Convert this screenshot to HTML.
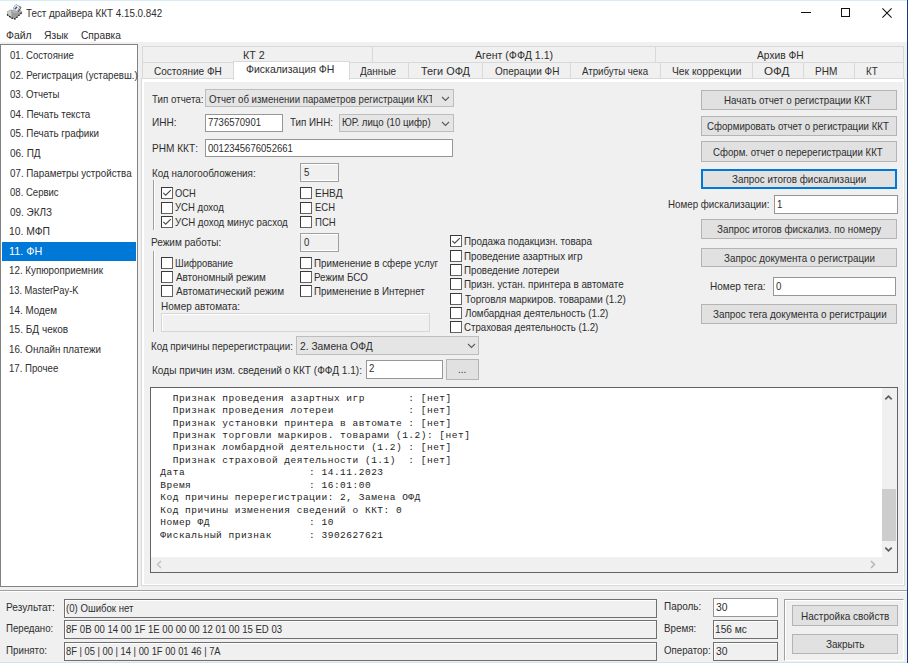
<!DOCTYPE html><html><head><meta charset="utf-8"><style>
*{margin:0;padding:0;box-sizing:border-box}
html,body{width:908px;height:663px;overflow:hidden;background:#f0f0f0}
body{position:relative;font-family:"Liberation Sans",sans-serif;font-size:11px;color:#000}
div,svg{position:absolute}
.t{white-space:pre;line-height:13px;font-size:11px;transform-origin:0 0;color:#2e2e2e}
.w{background:#fff}
.tb{background:#fff;border:1px solid #969696}
.ro{background:#f0f0f0;border:1px solid #a0a0a0;box-shadow:inset 0 1px 0 #fff,inset 0 -1px 0 #fff}
.cb{background:#e5e5e5;border:1px solid #bdbdbd}
.bt{background:#e1e1e1;border:1px solid #b4b4b4}
.chk{background:#fff;border:1px solid;border-color:#3a3a3a #646464 #646464 #3a3a3a;width:12px;height:12px}
.m{font-family:"Liberation Mono",monospace;font-size:9.5px;letter-spacing:0.5px;line-height:12.45px;white-space:pre;color:#222}
</style></head><body>
<div class="w" style="left:0px;top:0px;width:908px;height:42px;"></div>
<div class="" style="left:0px;top:0px;width:908px;height:1px;background:#d5eef5"></div>
<svg style="left:4px;top:2px" width="22" height="20" viewBox="0 0 22 20">
<path d="M3 9.5 L7 7.5 L10 8.5 L15 6.5 L18.5 10 L11 17 L7.5 16.5 L3 13 Z" fill="#9c9c9c"/>
<path d="M3.5 9.8 L7 8.2 L7.5 14.5 L3.5 12.5 Z" fill="#cfcfcf"/>
<path d="M7.5 9 L14.5 7.2 L17.5 10 L10 11 Z" fill="#b8b8b8"/>
<path d="M3 12.5 L7.5 16 L11 17 L18.5 10" fill="none" stroke="#1e1e1e" stroke-width="1.3" stroke-dasharray="1.6 1.2"/>
<path d="M9.5 5.5 L12 2.5 L16 4.5 L13 9.5 L10 8.5 Z" fill="#f6f6f6" stroke="#8c8c8c" stroke-width=".7"/>
<path d="M15.5 4.5 L17 5.5 L14 10" fill="none" stroke="#3a3a3a" stroke-width=".9"/>
<circle cx="11.5" cy="6.5" r="1" fill="#1d56b0"/><circle cx="12.5" cy="5.3" r=".9" fill="#1d56b0"/>
</svg>
<div class="t" style="left:26.38px;top:7.30px;transform:scaleX(0.8944);">Тест драйвера ККТ 4.15.0.842</div>
<div class="" style="left:801px;top:12px;width:10px;height:1px;background:#111"></div>
<div class="" style="left:841px;top:8px;width:9px;height:9px;border:1px solid #111"></div>
<svg style="left:881.5px;top:7.8px" width="10" height="10" viewBox="0 0 10 10"><path d="M.4 .4 L9.6 9.6 M9.6 .4 L.4 9.6" stroke="#111" stroke-width="1.05"/></svg>
<div class="t" style="left:6.12px;top:29.35px;transform:scaleX(0.9500);">Файл</div>
<div class="t" style="left:44.03px;top:29.35px;transform:scaleX(0.9386);">Язык</div>
<div class="t" style="left:81.14px;top:29.35px;transform:scaleX(0.9240);">Справка</div>
<div class="" style="left:907px;top:0px;width:1px;height:663px;background:#133f82"></div>
<div class="" style="left:0px;top:662px;width:907px;height:1px;background:#c9e6f2"></div>
<div class="" style="left:0px;top:44px;width:138px;height:543px;background:#fff;border:1px solid #828282"></div>
<div class="t" style="left:9.88px;top:49.05px;transform:scaleX(0.8717);">01. Состояние</div>
<div class="t" style="left:9.88px;top:68.62px;transform:scaleX(0.8813);">02. Регистрация (устаревш.)</div>
<div class="t" style="left:9.88px;top:88.20px;transform:scaleX(0.8775);">03. Отчеты</div>
<div class="t" style="left:9.88px;top:107.77px;transform:scaleX(0.8925);">04. Печать текста</div>
<div class="t" style="left:9.88px;top:127.35px;transform:scaleX(0.8919);">05. Печать графики</div>
<div class="t" style="left:9.87px;top:146.93px;transform:scaleX(0.9083);">06. ПД</div>
<div class="t" style="left:9.88px;top:166.50px;transform:scaleX(0.8894);">07. Параметры устройства</div>
<div class="t" style="left:9.88px;top:186.07px;transform:scaleX(0.8685);">08. Сервис</div>
<div class="t" style="left:9.87px;top:205.65px;transform:scaleX(0.9027);">09. ЭКЛЗ</div>
<div class="t" style="left:9.40px;top:225.22px;transform:scaleX(0.9396);">10. МФП</div>
<div class="" style="left:2px;top:242px;width:134px;height:19px;background:#0078d7"></div>
<div class="t" style="left:9.36px;top:244.80px;transform:scaleX(0.9829);color:#fff">11. ФН</div>
<div class="t" style="left:9.43px;top:264.38px;transform:scaleX(0.8895);">12. Купюроприемник</div>
<div class="t" style="left:9.46px;top:283.95px;transform:scaleX(0.8481);">13. MasterPay-K</div>
<div class="t" style="left:9.43px;top:303.52px;transform:scaleX(0.8938);">14. Модем</div>
<div class="t" style="left:9.42px;top:323.10px;transform:scaleX(0.9129);">15. БД чеков</div>
<div class="t" style="left:9.43px;top:342.68px;transform:scaleX(0.8882);">16. Онлайн платежи</div>
<div class="t" style="left:9.44px;top:362.25px;transform:scaleX(0.8764);">17. Прочее</div>
<div class="" style="left:141px;top:78px;width:764px;height:508px;border:1px solid #d9d9d9;background:#fff"></div>
<div class="" style="left:144px;top:82px;width:759px;height:502px;background:#f0f0f0"></div>
<div class="" style="left:142px;top:46px;width:231px;height:17px;border:1px solid #d9d9d9;background:#f0f0f0"></div>
<div class="t" style="left:243.27px;top:48.90px;transform:scaleX(0.9762);">КТ 2</div>
<div class="" style="left:372px;top:46px;width:284px;height:17px;border:1px solid #d9d9d9;background:#f0f0f0"></div>
<div class="t" style="left:475.00px;top:48.90px;transform:scaleX(0.9657);">Агент (ФФД 1.1)</div>
<div class="" style="left:655px;top:46px;width:249px;height:17px;border:1px solid #d9d9d9;background:#f0f0f0"></div>
<div class="t" style="left:756.50px;top:48.90px;transform:scaleX(0.9313);">Архив ФН</div>
<div class="" style="left:142px;top:62px;width:92px;height:17px;border:1px solid #d9d9d9;background:#f0f0f0"></div>
<div class="t" style="left:154.04px;top:64.75px;transform:scaleX(0.9137);">Состояние ФН</div>
<div class="" style="left:349px;top:62px;width:60px;height:17px;border:1px solid #d9d9d9;background:#f0f0f0"></div>
<div class="t" style="left:360.30px;top:64.75px;transform:scaleX(0.9096);">Данные</div>
<div class="" style="left:408px;top:62px;width:75px;height:17px;border:1px solid #d9d9d9;background:#f0f0f0"></div>
<div class="t" style="left:421.15px;top:64.75px;transform:scaleX(0.9898);">Теги ОФД</div>
<div class="" style="left:482px;top:62px;width:89px;height:17px;border:1px solid #d9d9d9;background:#f0f0f0"></div>
<div class="t" style="left:494.55px;top:64.75px;transform:scaleX(0.9094);">Операции ФН</div>
<div class="" style="left:570px;top:62px;width:91px;height:17px;border:1px solid #d9d9d9;background:#f0f0f0"></div>
<div class="t" style="left:582.40px;top:64.75px;transform:scaleX(0.8813);">Атрибуты чека</div>
<div class="" style="left:660px;top:62px;width:93px;height:17px;border:1px solid #d9d9d9;background:#f0f0f0"></div>
<div class="t" style="left:672.00px;top:64.75px;transform:scaleX(0.9375);">Чек коррекции</div>
<div class="" style="left:752px;top:62px;width:52px;height:17px;border:1px solid #d9d9d9;background:#f0f0f0"></div>
<div class="t" style="left:764.47px;top:64.75px;transform:scaleX(1.0553);">ОФД</div>
<div class="" style="left:803px;top:62px;width:52px;height:17px;border:1px solid #d9d9d9;background:#f0f0f0"></div>
<div class="t" style="left:814.81px;top:64.75px;transform:scaleX(0.9143);">РНМ</div>
<div class="" style="left:854px;top:62px;width:50px;height:17px;border:1px solid #d9d9d9;background:#f0f0f0"></div>
<div class="t" style="left:865.94px;top:64.75px;transform:scaleX(0.8816);">КТ</div>
<div class="" style="left:233px;top:61px;width:117px;height:19px;border:1px solid #d9d9d9;border-bottom:none;background:#fff"></div>
<div class="t" style="left:246.42px;top:63.35px;transform:scaleX(0.9541);">Фискализация ФН</div>
<div class="t" style="left:152.48px;top:93.00px;transform:scaleX(0.8881);">Тип отчета:</div>
<div class="cb" style="left:205px;top:89px;width:249px;height:18px;"></div>
<div class="t" style="left:208.76px;top:92.85px;transform:scaleX(0.8750);">Отчет об изменении параметров регистрации ККТ</div>
<div class="" style="left:432px;top:90px;width:21px;height:16px;background:#e5e5e5"></div>
<svg style="left:441px;top:95.5px" width="9" height="6" viewBox="0 0 9 6"><path d="M1 1 L4.5 4.5 L8 1" fill="none" stroke="#5a5a5a" stroke-width="1.1"/></svg>
<div class="t" style="left:151.71px;top:116.10px;transform:scaleX(0.9149);">ИНН:</div>
<div class="tb" style="left:205px;top:114px;width:78px;height:18px;"></div>
<div class="t" style="left:208.17px;top:116.10px;transform:scaleX(0.8664);">7736570901</div>
<div class="t" style="left:290.48px;top:116.10px;transform:scaleX(0.8915);">Тип ИНН:</div>
<div class="cb" style="left:339px;top:114px;width:115px;height:18px;"></div>
<div class="t" style="left:342.34px;top:116.25px;transform:scaleX(0.8806);">ЮР. лицо (10 цифр)</div>
<svg style="left:441px;top:120.5px" width="9" height="6" viewBox="0 0 9 6"><path d="M1 1 L4.5 4.5 L8 1" fill="none" stroke="#5a5a5a" stroke-width="1.1"/></svg>
<div class="t" style="left:151.71px;top:142.25px;transform:scaleX(0.9175);">РНМ ККТ:</div>
<div class="tb" style="left:205px;top:139px;width:248px;height:18px;"></div>
<div class="t" style="left:208.38px;top:141.85px;transform:scaleX(0.8668);">0012345676052661</div>
<div class="t" style="left:151.73px;top:166.95px;transform:scaleX(0.8965);">Код налогообложения:</div>
<div class="ro" style="left:300px;top:163px;width:39px;height:19px;"></div>
<div class="t" style="left:303.56px;top:165.85px;transform:scaleX(0.8800);">5</div>
<div class="" style="left:153px;top:180px;width:2px;height:50px;border-left:1px solid #a0a0a0;border-right:1px solid #fff"></div>
<div class="" style="left:153px;top:251px;width:2px;height:81px;border-left:1px solid #a0a0a0;border-right:1px solid #fff"></div>
<div class="chk" style="left:161px;top:187px"></div>
<svg style="left:161px;top:187px" width="12" height="12" viewBox="0 0 12 12"><path d="M2.3 5.9 L4.7 8.2 L9.8 3.1" fill="none" stroke="#4a4a4a" stroke-width="1.15"/></svg>
<div class="t" style="left:175.07px;top:187.35px;transform:scaleX(0.8516);">ОСН</div>
<div class="chk" style="left:161px;top:202px"></div>
<div class="t" style="left:175.28px;top:201.45px;transform:scaleX(0.8700);">УСН доход</div>
<div class="chk" style="left:161px;top:216px"></div>
<svg style="left:161px;top:216px" width="12" height="12" viewBox="0 0 12 12"><path d="M2.3 5.9 L4.7 8.2 L9.8 3.1" fill="none" stroke="#4a4a4a" stroke-width="1.15"/></svg>
<div class="t" style="left:175.28px;top:215.65px;transform:scaleX(0.8791);">УСН доход минус расход</div>
<div class="chk" style="left:300px;top:187px"></div>
<div class="t" style="left:314.71px;top:187.35px;transform:scaleX(0.9241);">ЕНВД</div>
<div class="chk" style="left:300px;top:202px"></div>
<div class="t" style="left:314.76px;top:201.45px;transform:scaleX(0.8598);">ЕСН</div>
<div class="chk" style="left:300px;top:216px"></div>
<div class="t" style="left:314.75px;top:215.65px;transform:scaleX(0.8719);">ПСН</div>
<div class="t" style="left:150.62px;top:235.95px;transform:scaleX(0.9069);">Режим работы:</div>
<div class="ro" style="left:300px;top:233px;width:39px;height:19px;"></div>
<div class="t" style="left:303.78px;top:235.85px;transform:scaleX(0.8800);">0</div>
<div class="chk" style="left:161px;top:257px"></div>
<div class="t" style="left:174.96px;top:256.85px;transform:scaleX(0.8586);">Шифрование</div>
<div class="chk" style="left:161px;top:271px"></div>
<div class="t" style="left:175.60px;top:271.05px;transform:scaleX(0.8965);">Автономный режим</div>
<div class="chk" style="left:161px;top:285px"></div>
<div class="t" style="left:175.60px;top:285.15px;transform:scaleX(0.9055);">Автоматический режим</div>
<div class="chk" style="left:300px;top:257px"></div>
<div class="t" style="left:314.13px;top:256.85px;transform:scaleX(0.8928);">Применение в сфере услуг</div>
<div class="chk" style="left:300px;top:271px"></div>
<div class="t" style="left:314.13px;top:271.05px;transform:scaleX(0.8928);">Режим БСО</div>
<div class="chk" style="left:300px;top:285px"></div>
<div class="t" style="left:314.13px;top:285.15px;transform:scaleX(0.8907);">Применение в Интернет</div>
<div class="t" style="left:160.52px;top:300.45px;transform:scaleX(0.9076);">Номер автомата:</div>
<div class="" style="left:161px;top:313px;width:269px;height:19px;border:1px solid #d6d6d6;box-shadow:inset 1px 1px 0 #fff;background:#f0f0f0"></div>
<div class="chk" style="left:450px;top:235px"></div>
<svg style="left:450px;top:235px" width="12" height="12" viewBox="0 0 12 12"><path d="M2.3 5.9 L4.7 8.2 L9.8 3.1" fill="none" stroke="#4a4a4a" stroke-width="1.15"/></svg>
<div class="t" style="left:464.13px;top:235.25px;transform:scaleX(0.8956);">Продажа подакцизн. товара</div>
<div class="chk" style="left:450px;top:250px"></div>
<div class="t" style="left:464.13px;top:250.25px;transform:scaleX(0.8928);">Проведение азартных игр</div>
<div class="chk" style="left:450px;top:264px"></div>
<div class="t" style="left:464.14px;top:264.25px;transform:scaleX(0.8858);">Проведение лотереи</div>
<div class="chk" style="left:450px;top:278px"></div>
<div class="t" style="left:464.13px;top:278.25px;transform:scaleX(0.8960);">Призн. устан. принтера в автомате</div>
<div class="chk" style="left:450px;top:293px"></div>
<div class="t" style="left:464.57px;top:293.25px;transform:scaleX(0.9014);">Торговля маркиров. товарами (1.2)</div>
<div class="chk" style="left:450px;top:307px"></div>
<div class="t" style="left:464.80px;top:307.25px;transform:scaleX(0.8856);">Ломбардная деятельность (1.2)</div>
<div class="chk" style="left:450px;top:321px"></div>
<div class="t" style="left:464.36px;top:321.25px;transform:scaleX(0.8776);">Страховая деятельность (1.2)</div>
<div class="t" style="left:151.03px;top:339.75px;transform:scaleX(0.8872);">Код причины перерегистрации:</div>
<div class="cb" style="left:296px;top:336px;width:183px;height:19px;"></div>
<div class="t" style="left:299.93px;top:339.75px;transform:scaleX(0.9333);">2. Замена ОФД</div>
<svg style="left:467px;top:342.5px" width="9" height="6" viewBox="0 0 9 6"><path d="M1 1 L4.5 4.5 L8 1" fill="none" stroke="#5a5a5a" stroke-width="1.1"/></svg>
<div class="t" style="left:151.61px;top:363.85px;transform:scaleX(0.9165);">Коды причин изм. сведений о ККТ (ФФД 1.1):</div>
<div class="tb" style="left:366px;top:360px;width:77px;height:19px;"></div>
<div class="t" style="left:368.86px;top:362.35px;transform:scaleX(0.8800);">2</div>
<div class="bt" style="left:446px;top:359px;width:33px;height:21px;"></div>
<div class="t" style="left:458.12px;top:362.85px;transform:scaleX(0.8800);">...</div>
<div class="" style="left:150px;top:387px;width:748px;height:186px;background:#fff;border:1px solid #646464"></div>
<div class="m" style="left:160.3px;top:392.6px">  Признак проведения азартных игр       : [нет]
  Признак проведения лотереи            : [нет]
  Признак установки принтера в автомате : [нет]
  Признак торговли маркиров. товарами (1.2): [нет]
  Признак ломбардной деятельности (1.2) : [нет]
  Признак страховой деятельности (1.1)  : [нет]
Дата                    : 14.11.2023
Время                   : 16:01:00
Код причины перерегистрации: 2, Замена ОФД
Код причины изменения сведений о ККТ: 0
Номер ФД                : 10
Фискальный признак      : 3902627621</div>
<div class="" style="left:882px;top:388px;width:15px;height:169px;background:#f0f0f0"></div>
<div class="" style="left:151px;top:557px;width:746px;height:15px;background:#f0f0f0"></div>
<div class="" style="left:882px;top:489px;width:14px;height:52px;background:#cdcdcd"></div>
<svg style="left:884px;top:394px" width="9" height="7" viewBox="0 0 9 7"><path d="M1.3 5.3 L4.5 2.1 L7.7 5.3" fill="none" stroke="#5c5c5c" stroke-width="1.7"/></svg>
<svg style="left:884px;top:546px" width="9" height="7" viewBox="0 0 9 7"><path d="M1.3 1.7 L4.5 4.9 L7.7 1.7" fill="none" stroke="#5c5c5c" stroke-width="1.7"/></svg>
<svg style="left:870px;top:560px" width="6" height="9" viewBox="0 0 6 9"><path d="M1 1 L4.5 4.5 L1 8" fill="none" stroke="#b8b8b8" stroke-width="1.6"/></svg>
<svg style="left:156px;top:560px" width="6" height="9" viewBox="0 0 6 9"><path d="M5 1 L1.5 4.5 L5 8" fill="none" stroke="#c4c4c4" stroke-width="1.6"/></svg>
<div class="bt" style="left:701px;top:90px;width:196px;height:20px;"></div>
<div class="t" style="left:724.03px;top:94.25px;transform:scaleX(0.8918);">Начать отчет о регистрации ККТ</div>
<div class="bt" style="left:701px;top:116px;width:196px;height:20px;"></div>
<div class="t" style="left:707.26px;top:120.25px;transform:scaleX(0.8801);">Сформировать отчет о регистрации ККТ</div>
<div class="bt" style="left:701px;top:141px;width:196px;height:21px;"></div>
<div class="t" style="left:713.26px;top:145.75px;transform:scaleX(0.8784);">Сформ. отчет о перерегистрации ККТ</div>
<div class="" style="left:701px;top:169px;width:196px;height:20px;background:#e1e1e1;border:2px solid #0078d7"></div>
<div class="t" style="left:732.48px;top:173.25px;transform:scaleX(0.8975);">Запрос итогов фискализации</div>
<div class="t" style="left:667.83px;top:198.25px;transform:scaleX(0.8880);">Номер фискализации:</div>
<div class="tb" style="left:774px;top:195px;width:124px;height:19px;"></div>
<div class="t" style="left:776.84px;top:198.05px;transform:scaleX(0.8800);">1</div>
<div class="bt" style="left:701px;top:219px;width:196px;height:20px;"></div>
<div class="t" style="left:717.38px;top:223.25px;transform:scaleX(0.8944);">Запрос итогов фискализ. по номеру</div>
<div class="bt" style="left:701px;top:248px;width:196px;height:19px;"></div>
<div class="t" style="left:723.58px;top:251.75px;transform:scaleX(0.8927);">Запрос документа о регистрации</div>
<div class="t" style="left:710.32px;top:280.25px;transform:scaleX(0.9114);">Номер тега:</div>
<div class="tb" style="left:773px;top:277px;width:123px;height:19px;"></div>
<div class="t" style="left:776.28px;top:280.05px;transform:scaleX(0.8800);">0</div>
<div class="bt" style="left:701px;top:304px;width:196px;height:20px;"></div>
<div class="t" style="left:712.98px;top:308.25px;transform:scaleX(0.8993);">Запрос тега документа о регистрации</div>
<div class="" style="left:0px;top:590px;width:907px;height:2px;border-top:1px solid #a0a0a0;border-bottom:1px solid #fff"></div>
<div class="t" style="left:6.31px;top:600.65px;transform:scaleX(0.9184);">Результат:</div>
<div class="" style="left:64px;top:599px;width:593px;height:19px;border:1px solid #6f6f6f;box-shadow:inset 1px 1px 0 #fff;background:#f0f0f0"></div>
<div class="t" style="left:66.16px;top:602.35px;transform:scaleX(0.8745);">(0) Ошибок нет</div>
<div class="t" style="left:6.34px;top:621.65px;transform:scaleX(0.8785);">Передано:</div>
<div class="" style="left:64px;top:620px;width:593px;height:19px;border:1px solid #6f6f6f;box-shadow:inset 1px 1px 0 #fff;background:#f0f0f0"></div>
<div class="t" style="left:66.16px;top:623.35px;transform:scaleX(0.8703);">8F 0B 00 14 00 1F 1E 00 00 00 12 01 00 15 ED 03</div>
<div class="t" style="left:6.33px;top:643.65px;transform:scaleX(0.8872);">Принято:</div>
<div class="" style="left:64px;top:642px;width:593px;height:19px;border:1px solid #6f6f6f;box-shadow:inset 1px 1px 0 #fff;background:#f0f0f0"></div>
<div class="t" style="left:66.17px;top:645.35px;transform:scaleX(0.8502);">8F | 05 | 00 | 14 | 00 1F 00 01 46 | 7A</div>
<div class="t" style="left:664.02px;top:599.55px;transform:scaleX(0.9038);">Пароль:</div>
<div class="tb" style="left:713px;top:598px;width:65px;height:19px;"></div>
<div class="t" style="left:715.63px;top:600.65px;transform:scaleX(0.9391);">30</div>
<div class="t" style="left:664.03px;top:622.25px;transform:scaleX(0.8928);">Время:</div>
<div class="" style="left:713px;top:620px;width:65px;height:19px;border:1px solid #6f6f6f;box-shadow:inset 1px 1px 0 #fff;background:#f0f0f0"></div>
<div class="t" style="left:715.41px;top:623.15px;transform:scaleX(0.9254);">156 мс</div>
<div class="t" style="left:664.26px;top:643.75px;transform:scaleX(0.8816);">Оператор:</div>
<div class="" style="left:713px;top:642px;width:65px;height:19px;border:1px solid #6f6f6f;box-shadow:inset 1px 1px 0 #fff;background:#f0f0f0"></div>
<div class="t" style="left:715.63px;top:644.55px;transform:scaleX(0.9391);">30</div>
<div class="" style="left:784px;top:599px;width:120px;height:62px;border-top:1px solid #a0a0a0;border-left:1px solid #a0a0a0;border-right:1px solid #fff;border-bottom:1px solid #fff;box-shadow:inset 1px 1px 0 #fff"></div>
<div class="bt" style="left:792px;top:605px;width:106px;height:21px;"></div>
<div class="t" style="left:801.22px;top:609.75px;transform:scaleX(0.9104);">Настройка свойств</div>
<div class="bt" style="left:792px;top:634px;width:106px;height:20px;"></div>
<div class="t" style="left:826.07px;top:638.25px;transform:scaleX(0.9102);">Закрыть</div>
</body></html>
